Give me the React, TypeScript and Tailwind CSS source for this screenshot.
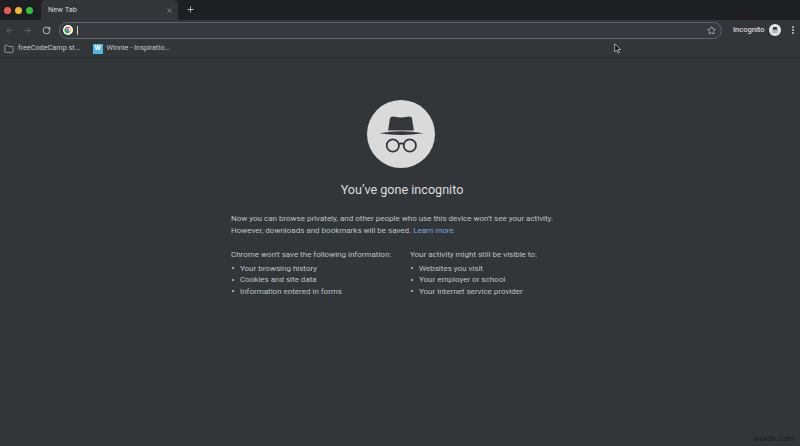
import { ArrowLeft, ArrowRight, RotateCw, Star, X, Plus, Folder } from "lucide-react";

function IncognitoGlyph({ className }: { className?: string }) {
  return (
    <svg viewBox="0 0 100 100" className={className}>
      <path d="M34 26 Q36 24 40 24.500 L46 25.500 Q50 26 54 25.500 L60 24.500 Q64 24 66 26 L69 45 L31 45 Z" fill="currentColor" />
      <path d="M18 49 Q50 43 83 49 Q50 54 18 49 Z" fill="currentColor" />
      <circle cx="38" cy="67" r="9" fill="none" stroke="currentColor" strokeWidth="2.600" />
      <circle cx="63" cy="67" r="9" fill="none" stroke="currentColor" strokeWidth="2.600" />
      <path d="M47 65 Q50.500 62.500 54 65" fill="none" stroke="currentColor" strokeWidth="2.400" />
    </svg>
  );
}

function GoogleG() {
  return (
    <svg viewBox="0 0 24 24" className="h-[10px] w-[10px] rounded-full bg-white">
      <path d="M12 4a8 8 0 0 1 7 4h-7a4 4 0 0 0-3.500 2L5.500 6.500A8 8 0 0 1 12 4z" fill="#ea4335" />
      <path d="M19 8a8 8 0 0 1-6 12l3.500-6a4 4 0 0 0-1-6z" fill="#fbbc05" />
      <path d="M13 20a8 8 0 0 1-7.500-13.500L9 12a4 4 0 0 0 4 2.500l3 0z" fill="#34a853" />
      <circle cx="12" cy="12" r="3.300" fill="#4285f4" />
    </svg>
  );
}

function Column({ title, items, className }: { title: string; items: string[]; className: string }) {
  return (
    <div className={className}>
      <p className="mb-[2px]">{title}</p>
      <ul>
        {items.map((item) => (
          <li key={item} className="flex items-center">
            <span className="ml-[1px] mr-[6px] h-[2px] w-[2px] rounded-full bg-[#c4c6c8]" />
            {item}
          </li>
        ))}
      </ul>
    </div>
  );
}

export default function App() {
  return (
    <div
      className="relative flex h-[446px] w-[800px] flex-col overflow-hidden bg-[#323639] text-[#bfc1c3]"
      style={{ fontFamily: "Roboto, 'Liberation Sans', sans-serif" }}
    >
      {/* tab strip */}
      <div className="flex h-[20px] items-end bg-[#1e1f22]">
        <div className="flex h-[20px] w-[41px] items-center gap-[4px] pl-[4px]">
          <span className="h-[7px] w-[7px] rounded-full bg-[#ee5c54]" />
          <span className="h-[7px] w-[7px] rounded-full bg-[#f5b82f]" />
          <span className="h-[7px] w-[7px] rounded-full bg-[#2fc23f]" />
        </div>
        <div className="flex h-[20px] w-[137px] items-center justify-between rounded-t-[5px] bg-[#323639] pl-[7px] pr-[5px] text-[7.500px] text-[#d0d2d4]">
          <span>New Tab</span>
          <X size={7} strokeWidth={2} className="text-[#b5b7b9]" />
        </div>
        <Plus size={9} strokeWidth={2} className="mb-[6px] ml-[8px] text-[#e4e5e6]" />
      </div>

      {/* toolbar */}
      <div className="flex h-[20px] items-center pl-[5px]">
        <ArrowLeft size={9} className="text-[#6d7073]" />
        <ArrowRight size={9} className="ml-[9px] text-[#6d7073]" />
        <RotateCw size={9} strokeWidth={2.200} className="ml-[10px] text-[#d2d3d5]" />
        <div className="ml-[8px] flex h-[17px] w-[663px] items-center rounded-full border border-[#5b6673] bg-[#36393d] pl-[3px] pr-[5px]">
          <GoogleG />
          <span className="ml-[4px] h-[9px] w-px bg-[#c8cacc]" />
          <Star size={9} className="ml-auto text-[#c2c4c6]" />
        </div>
        <span className="ml-[11px] text-[7.500px] font-medium text-[#d4d5d7]">Incognito</span>
        <span className="ml-[5px] flex h-[12px] w-[12px] items-center justify-center rounded-full bg-[#e6e6e6] text-[#35363a]">
          <IncognitoGlyph className="h-[12px] w-[12px]" />
        </span>
        <span className="ml-[11px] flex flex-col gap-[1px]">
          <span className="h-[2px] w-[2px] rounded-full bg-[#c8cacc]" />
          <span className="h-[2px] w-[2px] rounded-full bg-[#c8cacc]" />
          <span className="h-[2px] w-[2px] rounded-full bg-[#c8cacc]" />
        </span>
      </div>

      {/* bookmarks */}
      <div className="flex h-[18px] items-center border-b border-[#2b2e31] pl-[4px] text-[7.300px] text-[#c4c6c8]">
        <Folder size={10} className="text-[#a9abae]" />
        <span className="ml-[4px]">freeCodeCamp st...</span>
        <span className="ml-[12px] flex h-[10px] w-[10px] items-center justify-center bg-[#4fb7e0] text-[7px] font-bold leading-none text-white">W</span>
        <span className="ml-[4px]">Winnie - Inspiratio...</span>
      </div>

      {/* page */}
      <main className="flex flex-col items-center pt-[42px]">
        <div className="ml-[2px] flex h-[68px] w-[68px] items-center justify-center rounded-full bg-[#dadada] text-[#35363a]">
          <IncognitoGlyph className="h-[68px] w-[68px]" />
        </div>
        <h1 className="ml-[4px] mt-[13px] text-[12.600px] font-normal leading-[17px] text-[#dcdddf]">You’ve gone incognito</h1>
        <div className="mt-[15px] w-[338px] text-[8px] leading-[11.500px]">
          <p>
            Now you can browse privately, and other people who use this device won't see your activity.
            <br />
            However, downloads and bookmarks will be saved. <span className="text-[#7da7e0]">Learn more</span>
          </p>
          <div className="mt-[13px] flex">
            <Column
              className="w-[179px]"
              title="Chrome won't save the following information:"
              items={["Your browsing history", "Cookies and site data", "Information entered in forms"]}
            />
            <Column
              className="flex-1"
              title="Your activity might still be visible to:"
              items={["Websites you visit", "Your employer or school", "Your internet service provider"]}
            />
          </div>
        </div>
      </main>

      {/* mouse pointer */}
      <svg viewBox="0 0 12 16" className="absolute left-[614px] top-[43px] h-[11px] w-[8px]">
        <path d="M1 1 L1 13 L4 10 L6 15 L8 14 L6 9.500 L10 9.500 Z" fill="#111" stroke="#ddd" strokeWidth="1" />
      </svg>

      <span className="absolute bottom-[1px] right-[6px] text-[8px] text-[#1c1d1f]">wsxdn.com</span>
    </div>
  );
}
